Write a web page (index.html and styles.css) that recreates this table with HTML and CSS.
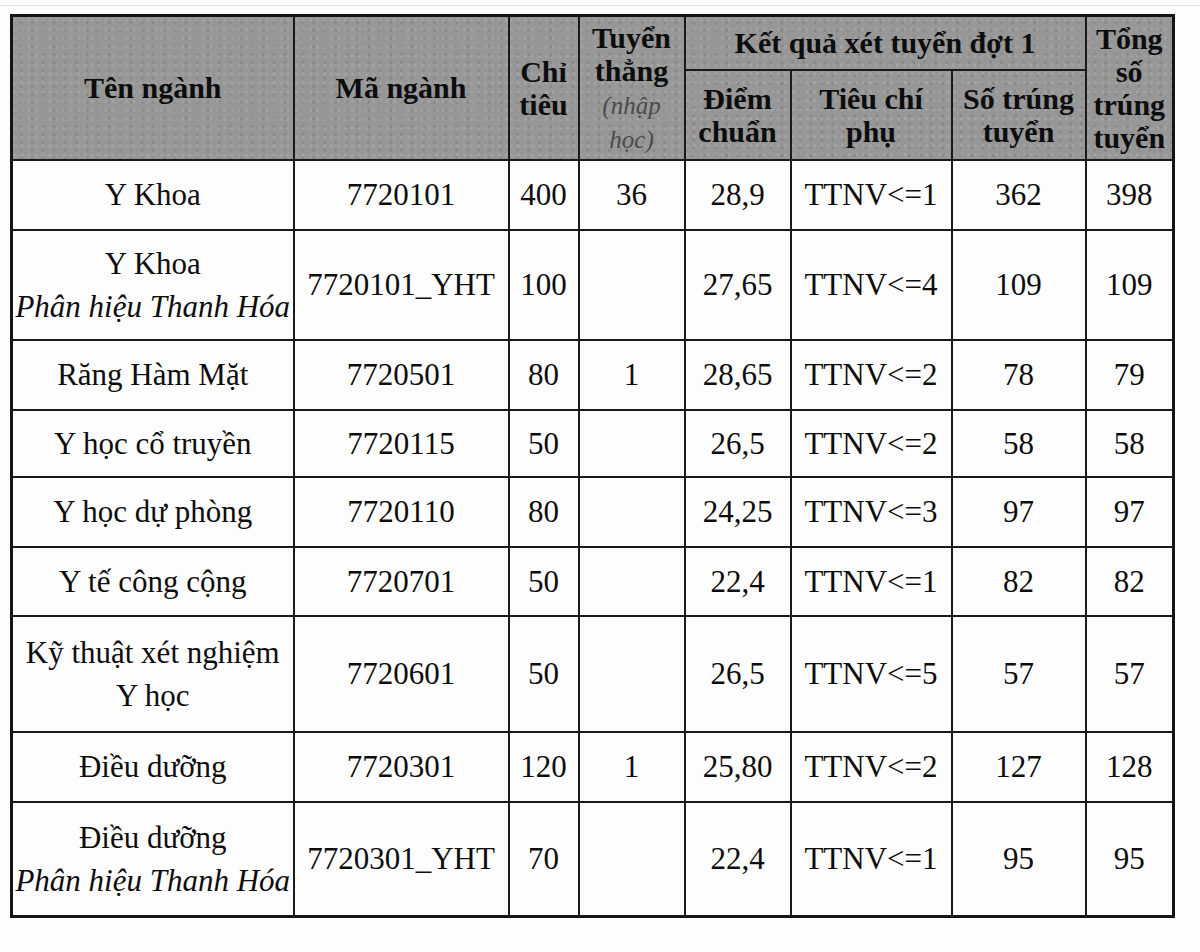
FILE: index.html
```html
<!DOCTYPE html>
<html lang="vi">
<head>
<meta charset="utf-8">
<title>Kết quả xét tuyển đợt 1</title>
<link rel="stylesheet" href="styles.css">
</head>
<body>
<div class="page">
  <div class="topline"></div>
  <table class="results">
    <colgroup>
      <col class="c-name">
      <col class="c-code">
      <col class="c-quota">
      <col class="c-direct">
      <col class="c-score">
      <col class="c-crit">
      <col class="c-count">
      <col class="c-total">
    </colgroup>
    <thead>
      <tr class="h1">
        <th rowspan="2">Tên ngành</th>
        <th rowspan="2">Mã ngành</th>
        <th rowspan="2">Chỉ<br>tiêu</th>
        <th rowspan="2">Tuyển<br>thẳng<br><span class="note">(nhập<br>học)</span></th>
        <th colspan="3">Kết quả xét tuyển đợt 1</th>
        <th rowspan="2">Tổng<br>số<br>trúng<br>tuyển</th>
      </tr>
      <tr class="h2">
        <th>Điểm<br>chuẩn</th>
        <th>Tiêu chí<br>phụ</th>
        <th>Số trúng<br>tuyển</th>
      </tr>
    </thead>
    <tbody>
      <tr class="r70"><td>Y Khoa</td><td>7720101</td><td>400</td><td>36</td><td>28,9</td><td>TTNV&lt;=1</td><td>362</td><td>398</td></tr>
      <tr class="r110"><td>Y Khoa<br><em>Phân hiệu Thanh Hóa</em></td><td>7720101_YHT</td><td>100</td><td></td><td>27,65</td><td>TTNV&lt;=4</td><td>109</td><td>109</td></tr>
      <tr class="r70"><td>Răng Hàm Mặt</td><td>7720501</td><td>80</td><td>1</td><td>28,65</td><td>TTNV&lt;=2</td><td>78</td><td>79</td></tr>
      <tr class="r67"><td>Y học cổ truyền</td><td>7720115</td><td>50</td><td></td><td>26,5</td><td>TTNV&lt;=2</td><td>58</td><td>58</td></tr>
      <tr class="r70"><td>Y học dự phòng</td><td>7720110</td><td>80</td><td></td><td>24,25</td><td>TTNV&lt;=3</td><td>97</td><td>97</td></tr>
      <tr class="r69"><td>Y tế công cộng</td><td>7720701</td><td>50</td><td></td><td>22,4</td><td>TTNV&lt;=1</td><td>82</td><td>82</td></tr>
      <tr class="r116"><td>Kỹ thuật xét nghiệm<br>Y học</td><td>7720601</td><td>50</td><td></td><td>26,5</td><td>TTNV&lt;=5</td><td>57</td><td>57</td></tr>
      <tr class="r70"><td>Điều dưỡng</td><td>7720301</td><td>120</td><td>1</td><td>25,80</td><td>TTNV&lt;=2</td><td>127</td><td>128</td></tr>
      <tr class="r115"><td>Điều dưỡng<br><em>Phân hiệu Thanh Hóa</em></td><td>7720301_YHT</td><td>70</td><td></td><td>22,4</td><td>TTNV&lt;=1</td><td>95</td><td>95</td></tr>
    </tbody>
  </table>
</div>
</body>
</html>
```

FILE: styles.css
```css
html, body {
  margin: 0;
  padding: 0;
  background: #ffffff;
}

.page {
  width: 1200px;
  height: 952px;
  padding: 0 0 0 10px;
  box-sizing: border-box;
  background: #fdfdfd;
  color: #0d0d0d;
}

.page,
.results,
.results th,
.results td,
.note,
.results em {
  font-family: "Liberation Serif", "Tinos", "Nimbus Roman", "Times New Roman", "DejaVu Serif", serif;
}

.topline {
  height: 5px;
  margin-left: -10px;
  border-bottom: 1px solid #e2e2e2;
  margin-bottom: 8px;
}

.results {
  border-collapse: collapse;
  table-layout: fixed;
  width: 1162px;
  border: 3px solid #151515;
}

.c-name { width: 282px; }
.c-code { width: 215px; }
.c-quota { width: 70px; }
.c-direct { width: 106px; }
.c-score { width: 106px; }
.c-crit { width: 161px; }
.c-count { width: 134px; }
.c-total { width: 88px; }

.results th,
.results td {
  border: 2px solid #1a1a1a;
  padding: 0;
  text-align: center;
  vertical-align: middle;
}

.results th {
  background-color: #979797;
  background-image:
    radial-gradient(circle at 20% 30%, rgba(255,255,255,0.12) 0 1px, transparent 2px),
    radial-gradient(circle at 70% 60%, rgba(0,0,0,0.10) 0 1px, transparent 2px);
  background-size: 7px 9px, 11px 8px;
  font-weight: bold;
  font-size: 30px;
  line-height: 33px;
  color: #0d0d0d;
}

.h1 { height: 54px; }
.h2 { height: 90px; }

.note {
  font-weight: normal;
  font-style: italic;
  font-size: 25px;
  color: #4a4a4a;
  line-height: 30px;
}

.results td {
  font-size: 31px;
  line-height: 43px;
  white-space: nowrap;
}

.results td em {
  font-style: italic;
}

.r67 { height: 67px; }
.r69 { height: 69px; }
.r70 { height: 70px; }
.r110 { height: 110px; }
.r115 { height: 115px; }
.r116 { height: 116px; }
```
